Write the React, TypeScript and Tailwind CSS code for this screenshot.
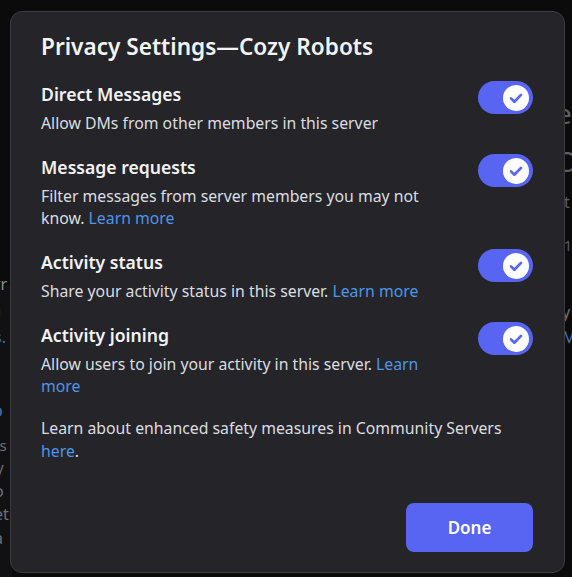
import React from "react";

const settings = [
  {
    title: "Direct Messages",
    desc: "Allow DMs from other members in this server",
    link: false,
  },
  {
    title: "Message requests",
    desc: "Filter messages from server members you may not know.",
    link: true,
  },
  {
    title: "Activity status",
    desc: "Share your activity status in this server.",
    link: true,
  },
  {
    title: "Activity joining",
    desc: "Allow users to join your activity in this server.",
    link: true,
  },
];

function Toggle() {
  return (
    <div className="mt-[4px] flex h-[33px] w-[55px] shrink-0 items-center justify-end rounded-full bg-[#5865f2] pr-[4px]">
      <div className="flex h-[26px] w-[26px] items-center justify-center rounded-full bg-white">
        <svg width="26" height="26" viewBox="0 0 26 26" fill="none">
          <path
            d="M8 13.4l3.4 3.3 6.6-6.8"
            stroke="#5865f2"
            strokeWidth="2.7"
            strokeLinecap="round"
            strokeLinejoin="round"
          />
        </svg>
      </div>
    </div>
  );
}

export default function App() {
  return (
    <div
      className="relative h-[577px] w-[572px] overflow-hidden bg-[#0b0b0c]"
      style={{ fontFamily: '"Noto Sans", "Open Sans", sans-serif' }}
    >
      {/* pagina de fondo, casi oculta por el modal */}
      <div className="absolute left-0 top-[285px] h-[292px] w-[12px] bg-[#111113]" />
      <span className="absolute left-[-6px] top-[272px] text-[16px] text-[#8a8c90]">rr</span>
      <span className="absolute left-[-8px] top-[297px] text-[16px] text-[#8a8c90]">a</span>
      <span className="absolute left-[-6px] top-[325px] text-[16px] text-[#3d6fb0]">s.</span>
      <span className="absolute left-[-8px] top-[397px] text-[18px] text-[#3d6fb0]">o</span>
      <span className="absolute left-[-6px] top-[434px] text-[15px] text-[#6f7176]">ts</span>
      <span className="absolute left-[-4px] top-[456px] text-[15px] text-[#6f7176]">y</span>
      <span className="absolute left-[-6px] top-[479px] text-[16px] text-[#6f7176]">o</span>
      <span className="absolute left-[-6px] top-[502px] text-[16px] text-[#6f7176]">et</span>
      <span className="absolute left-[-6px] top-[526px] text-[16px] text-[#6f7176]">a</span>
      <span className="absolute left-[556px] top-[92px] text-[28px] text-[#5c5e63]">e</span>
      <span className="absolute left-[556px] top-[140px] text-[28px] text-[#5c5e63]">O</span>
      <span className="absolute left-[564px] top-[190px] text-[16px] text-[#5c5e63]">t</span>
      <span className="absolute left-[564px] top-[235px] text-[14px] text-[#5c5e63]">1</span>
      <span className="absolute left-[562px] top-[300px] text-[16px] text-[#6f7176]">y</span>
      <span className="absolute left-[562px] top-[325px] text-[16px] text-[#3d6fb0]">M</span>

      <div className="absolute left-[10px] top-[11px] flex h-[562px] w-[555px] flex-col rounded-[12px] border border-[#3a3a40] bg-[#242429] pl-[30px] pr-[31px] pt-[20px]">
        <h1 className="text-[22.6px] font-semibold leading-[30px] text-[#f2f3f5]">
          Privacy Settings—Cozy Robots
        </h1>

        <div className="mt-[15px] flex flex-col gap-[16px]">
          {settings.map((s) => (
            <div key={s.title} className="flex items-start justify-between gap-4">
              <div className="w-[386px]">
                <div className="text-[17.6px] font-semibold leading-[34px] text-[#f2f3f5]">
                  {s.title}
                </div>
                <p className="mt-[1px] text-[15.8px] leading-[22px] text-[#dbdee1]">
                  {s.desc}
                  {s.link && (
                    <>
                      {" "}
                      <a className="text-[#4f95e8]">Learn more</a>
                    </>
                  )}
                </p>
              </div>
              <Toggle />
            </div>
          ))}
        </div>

        <p className="mt-[20px] w-[470px] text-[15.8px] leading-[23px] text-[#dbdee1]">
          Learn about enhanced safety measures in Community Servers{" "}
          <a className="text-[#4f95e8]">here</a>.
        </p>

        <div className="mt-auto mb-[20px] flex justify-end">
          <button className="h-[49px] w-[127px] rounded-[8px] bg-[#5865f2] text-[17px] font-semibold text-white">
            Done
          </button>
        </div>
      </div>
    </div>
  );
}
